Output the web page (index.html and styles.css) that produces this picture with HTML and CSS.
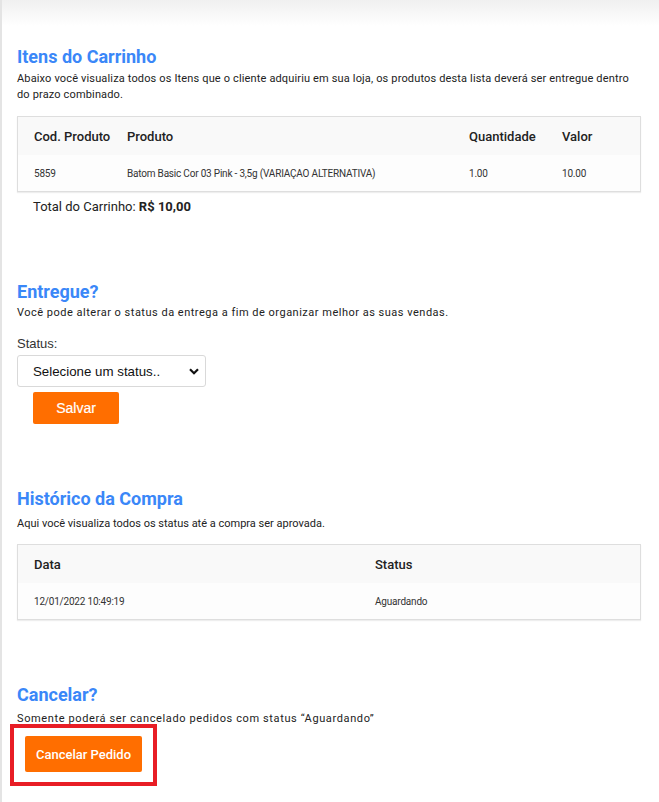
FILE: index.html
```html
<!DOCTYPE html>
<html lang="pt-BR">
<head>
<meta charset="utf-8">
<title>Pedido</title>
<link rel="stylesheet" href="styles.css">
</head>
<body>
<div class="page">
  <div class="top-shadow"></div>
  <main class="content">
    <section class="sec sec-itens">
      <h2 class="title">Itens do Carrinho</h2>
      <p class="desc desc-itens">Abaixo você visualiza todos os Itens que o cliente adquiriu em sua loja, os produtos desta lista deverá ser entregue dentro do prazo combinado.</p>
      <table class="tbl tbl-itens">
        <thead>
          <tr><th class="c-cod">Cod. Produto</th><th class="c-prod">Produto</th><th class="c-qtd">Quantidade</th><th class="c-val">Valor</th></tr>
        </thead>
        <tbody>
          <tr><td>5859</td><td>Batom Basic Cor 03 Pink - 3,5g (VARIAÇAO ALTERNATIVA)</td><td>1.00</td><td>10.00</td></tr>
        </tbody>
      </table>
      <p class="total">Total do Carrinho: <strong>R$ 10,00</strong></p>
    </section>

    <section class="sec sec-entregue">
      <h2 class="title">Entregue?</h2>
      <p class="desc desc-wide">Você pode alterar o status da entrega a fim de organizar melhor as suas vendas.</p>
      <label class="label" for="status">Status:</label>
      <div class="select-wrap">
        <select id="status" class="select">
          <option>Selecione um status..</option>
        </select>
        <svg class="chev" width="10" height="7" viewBox="0 0 10 7"><path d="M1 1.2 L5 5.2 L9 1.2" fill="none" stroke="#111" stroke-width="2.2"/></svg>
      </div>
      <button class="btn btn-salvar" type="button">Salvar</button>
    </section>

    <section class="sec sec-hist">
      <h2 class="title">Histórico da Compra</h2>
      <p class="desc">Aqui você visualiza todos os status até a compra ser aprovada.</p>
      <table class="tbl tbl-hist">
        <thead>
          <tr><th class="c-data">Data</th><th>Status</th></tr>
        </thead>
        <tbody>
          <tr><td>12/01/2022 10:49:19</td><td>Aguardando</td></tr>
        </tbody>
      </table>
    </section>

    <section class="sec sec-cancel">
      <h2 class="title">Cancelar?</h2>
      <p class="desc desc-wider">Somente poderá ser cancelado pedidos com status “Aguardando”</p>
      <div class="highlight">
        <button class="btn btn-cancel" type="button">Cancelar Pedido</button>
      </div>
    </section>
  </main>
</div>
</body>
</html>
```

FILE: styles.css
```css
html, body {
  margin: 0;
  padding: 0;
  background: #fff;
}
body {
  font-family: Roboto, "Liberation Sans", Arial, sans-serif;
  color: #222;
}
.page {
  min-height: 802px;
  border-left: 2px solid #e4e4e4;
  box-sizing: border-box;
}
.top-shadow {
  height: 26px;
  background: linear-gradient(#f0f0f0, #fff);
}
.content {
  padding: 0 18px 0 15px;
}
.sec { margin: 0; }
.title {
  margin: 0;
  font-family: Roboto, sans-serif;
  font-weight: 700;
  font-size: 18px;
  line-height: 22px;
  color: #3a87f8;
}
.desc {
  margin: 0;
  font-size: 11px;
  line-height: 16px;
  color: #222;
}
.desc-itens { letter-spacing: 0.15px; }
.desc-wide { letter-spacing: 0.5px; }
.desc-wider { letter-spacing: 0.62px; }
.sec-itens { padding-top: 20px; }
.sec-itens .desc { margin-top: 3px; }

.tbl {
  width: 100%;
  border-collapse: collapse;
  border: 1px solid #dedede;
  box-shadow: 0 1px 1px #eee;
}
.tbl th {
  text-align: left;
  font-size: 13px;
  font-weight: 500;
  color: #222;
  background: #f9f9f9;
  height: 38px;
  padding: 0 0 0 16px;
}
.tbl td {
  font-size: 10px;
  color: #333;
  background: #fdfdfd;
  height: 36px;
  padding: 0 0 0 16px;
  letter-spacing: -0.2px;
}
.tbl-itens { margin-top: 13px; }
.tbl-itens .c-cod { width: 77px; }
.tbl-itens .c-prod { width: 326px; }
.tbl-itens .c-qtd { width: 77px; }
.tbl-hist { margin-top: 12px; }
.tbl-hist .c-data { width: 325px; }

.total {
  margin: 7px 0 0 16px;
  font-size: 13px;
  line-height: 16px;
  color: #222;
}
.total strong { font-weight: 700; }

.sec-entregue { padding-top: 66px; }
.sec-entregue .desc { margin-top: 2px; }
.label {
  display: block;
  margin-top: 15px;
  font-family: "Liberation Sans", Arial, sans-serif;
  font-size: 13px;
  line-height: 15px;
  color: #333;
}
.select-wrap {
  position: relative;
  width: 189px;
  margin-top: 4px;
}
.select {
  appearance: none;
  -webkit-appearance: none;
  display: block;
  width: 189px;
  height: 32px;
  border: 1px solid #d9d9d9;
  border-radius: 3px;
  background: #fff;
  font-family: "Liberation Sans", Arial, sans-serif;
  font-size: 13.3px;
  color: #111;
  padding: 0 0 0 15px;
}
.chev {
  position: absolute;
  right: 7px;
  top: 13px;
}
.btn {
  border: none;
  background: #ff6e00;
  color: #fff;
  border-radius: 2px;
  cursor: pointer;
  display: block;
}
.btn-salvar {
  margin: 5px 0 0 16px;
  width: 86px;
  height: 32px;
  font-family: "Liberation Sans", Arial, sans-serif;
  font-size: 14px;
  font-weight: 400;
  -webkit-text-stroke: 0.2px #fff;
}

.sec-hist { padding-top: 64px; }
.sec-hist .desc { margin-top: 6px; }

.sec-cancel { padding-top: 64px; }
.sec-cancel .desc { margin-top: 5px; }
.highlight {
  margin: -3px 0 0 -7px;
  width: 147px;
  height: 62px;
  box-sizing: border-box;
  border: 4px solid #e81d25;
  padding: 8px 0 0 11px;
}
.btn-cancel {
  width: 117px;
  height: 36px;
  font-family: Roboto, sans-serif;
  font-size: 13px;
  font-weight: 500;
}
```
